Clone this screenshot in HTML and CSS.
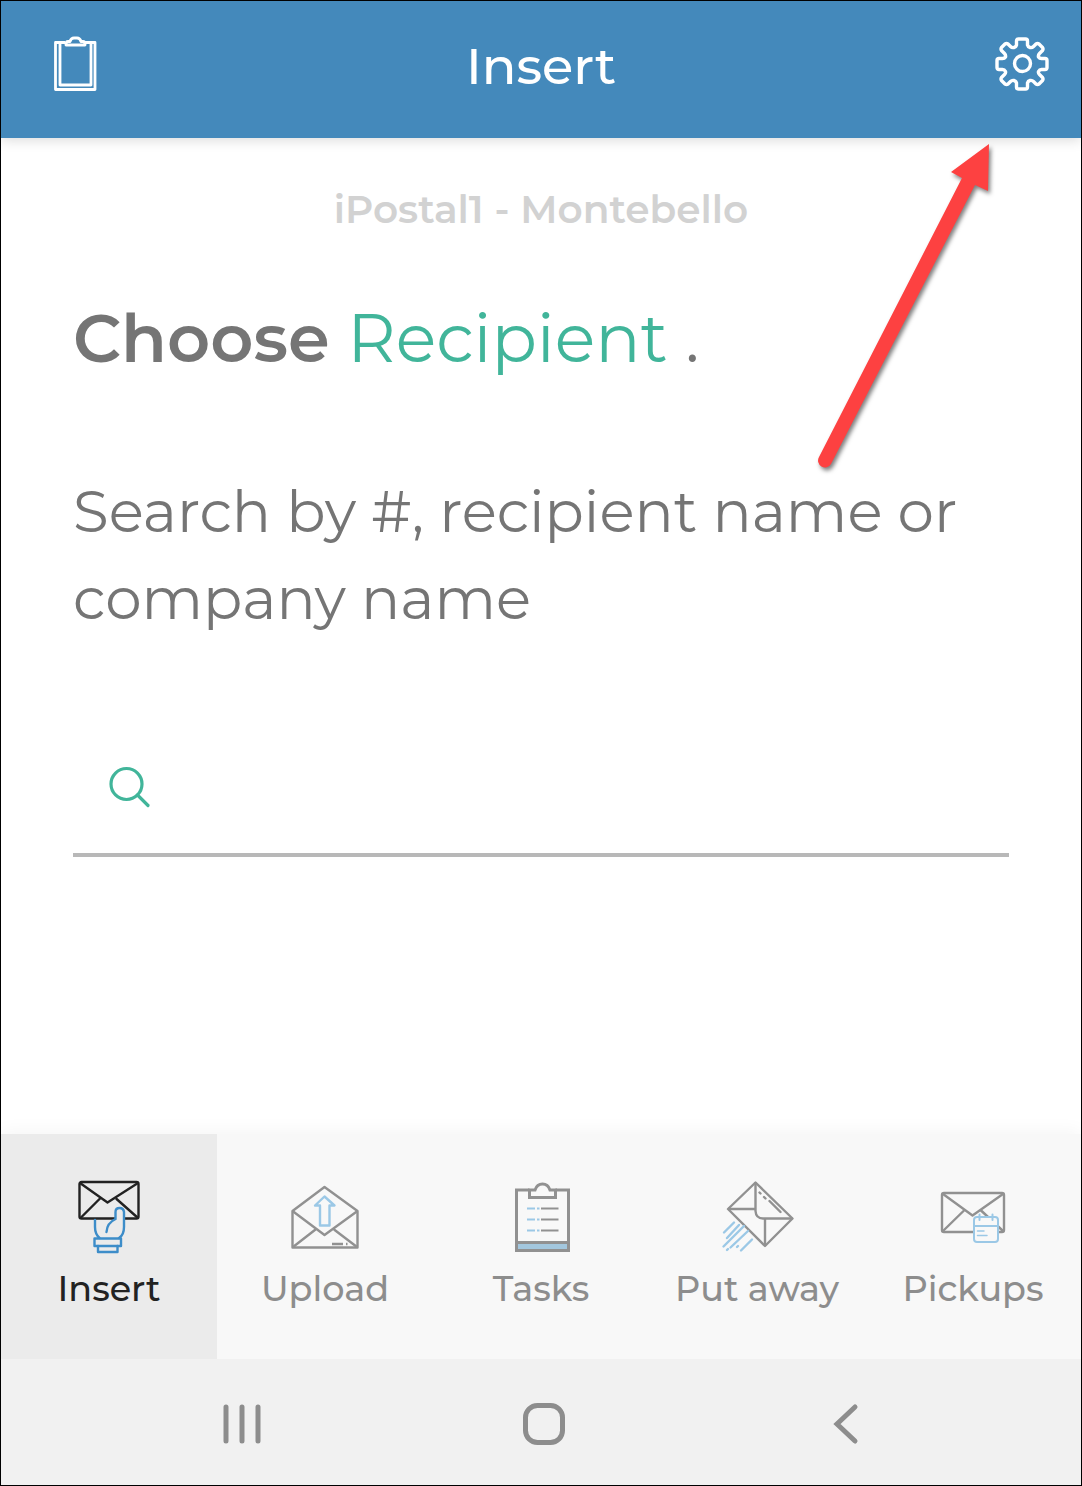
FILE: index.html
```html
<!DOCTYPE html>
<html lang="en">
<head>
    <meta charset="UTF-8">
    <meta name="viewport" content="width=device-width, initial-scale=1.0">
    <title>Insert</title>
    <link rel="stylesheet" href="styles.css">
</head>
<body>

<header class="topbar">
    <button class="icon-button" type="button" aria-label="Clipboard">
        <svg width="44" height="56" viewBox="0 0 44 56" fill="none" stroke="#fff" stroke-width="2.8" stroke-linejoin="round">
            <path d="M12 6.500H2.500V53.500H42V6.500H32"/>
            <path d="M12 6.500H7V49H38V6.500H32"/>
            <path d="M13 9V8Q13 5.500 15 5.500H17Q18 2 21 2H24Q27 2 28 5.500H30Q32 5.500 32 8V9Z"/>
        </svg>
    </button>
    <h1>Insert</h1>
    <button class="icon-button" type="button" aria-label="Settings">
        <svg width="54" height="54" viewBox="0 0 54 54" fill="none" stroke="#fff" stroke-width="3.4" stroke-linejoin="round">
            <circle cx="27.500" cy="26.500" r="8"/>
            <path d="M21.500 4Q21.500 2 23.500 2H30.500Q32.500 2 32.500 4V8Q33 10 35 10.500Q37 11 38.500 9.500L41 7Q42.500 6 44 7L47.500 10.500Q48.500 12 47.500 13.500L44.500 16.500Q43 18 43.500 20Q44.500 21.500 46.500 21.500H50Q52 21.500 52 23.500V30.500Q52 32.500 50 32.500H46.500Q44.500 32.500 43.500 34.500Q43 36 44.500 37.500L47.500 40.500Q48.500 42 47.500 43.500L44 47Q42.500 48 41 47L38.500 44.500Q37 43 35 43.500Q33 44 32.500 46V50Q32.500 52 30.500 52H23.500Q21.500 52 21.500 50V46Q21 44 19 43.500Q17 43 15.500 44.500L13 47Q11.500 48 10 47L6.500 43.500Q5.500 42 6.500 40.500L9.500 37.500Q11 36 10.500 34.500Q9.500 32.500 7.500 32.500H4Q2 32.500 2 30.500V23.500Q2 21.500 4 21.500H7.500Q9.500 21.500 10.500 20Q11 18 9.500 16.500L6.500 13.500Q5.500 12 6.500 10.500L10 7Q11.500 6 13 7L15.500 9.500Q17 11 19 10.500Q21 10 21.500 8Z"/>
        </svg>
    </button>
</header>

<main class="content">
    <p class="station">iPostal1 - Montebello</p>
    <h2><strong>Choose</strong> <span class="accent">Recipient</span> .</h2>
    <label class="hint" for="search">Search by #, recipient name or company name</label>
    <div class="search">
        <svg width="42" height="42" viewBox="0 0 42 42" fill="none" stroke="#41b59a" stroke-width="3.2" stroke-linecap="round">
            <circle cx="17.500" cy="18" r="15.500"/>
            <path d="M28.500 29L39 39.500"/>
        </svg>
        <input type="text" id="search">
    </div>
    <!-- Arrow pointing at the settings button -->
    <svg class="arrow" width="220" height="350" viewBox="0 0 220 350">
        <path d="M189 14L151 42L162 48L19 327A6.500 6.500 0 0 0 31 334L175 55L188 61Z" fill="#fd4141"/>
    </svg>
</main>

<nav class="tabs">
    <a class="tab active" href="#insert">
        <svg width="80" height="80" viewBox="0 0 80 80" fill="none" stroke="#222" stroke-width="2.4" stroke-linejoin="round">
            <rect x="10.500" y="5" width="59" height="36.500" rx="2"/>
            <path d="M11 6L38.500 25.500L69 6M11.500 41L31 21.500M69 41L47 21.500"/>
            <g stroke="#3d8dc9" stroke-width="2.4" stroke-linecap="round">
                <path d="M46.500 44V35Q46.500 31 50.500 31T55 35V44" fill="#ebebeb" stroke="none"/>
                <path d="M26 43V50Q26 57 30.500 61M46.500 42V35Q46.500 31 50.500 31T55 35V50Q55 58 50 61M46.500 42Q38 46 37.500 55"/>
                <rect x="25.500" y="61.500" width="26.500" height="7.500"/>
                <path d="M29 69V75H48.500V69"/>
            </g>
        </svg>
        Insert
    </a>
    <a class="tab" href="#upload">
        <svg width="80" height="80" viewBox="0 0 80 80" fill="none" stroke="#919191" stroke-width="2.4" stroke-linejoin="round">
            <path d="M7.500 34L39.500 10L72.500 34V70.500H7.500Z"/>
            <path d="M7.500 34L39.500 58L72.500 34M8 70L30.500 52.500M72 70L49 52.500M47 67H58M61 67H62.500"/>
            <path d="M39.500 19.500L49.500 28.500H44.500V48.500H35V28.500H30Z" stroke="#9bc8e6"/>
        </svg>
        Upload
    </a>
    <a class="tab" href="#tasks">
        <svg width="80" height="80" viewBox="0 0 80 80" fill="none" stroke="#919191" stroke-width="3">
            <rect x="15.500" y="65.500" width="52" height="8" fill="#a3c7de"/>
            <path d="M28.500 13H15.500V73.500H67.500V13H54.500"/>
            <path d="M28.500 13H34Q36 7 41.500 7T49 13H54.500V20.500H28.500Z"/>
            <path d="M40 31.500H57.500M40 42.500H57.500M40 53.500H57.500" stroke-width="2"/>
            <path d="M26 31.500H34M36 31.500H38.500M26 42.500H34M36 42.500H38.500M26 53.500H34M36 53.500H38.500" stroke="#9bc8e6" stroke-width="2"/>
        </svg>
        Tasks
    </a>
    <a class="tab" href="#putaway">
        <svg width="80" height="80" viewBox="0 0 80 80" fill="none" stroke="#919191" stroke-width="2.4" stroke-linejoin="round">
            <path d="M38.500 5.500L75.500 41.500L48 69L11 32Z"/>
            <path d="M11 32H38.500M38.500 5.500V34Q39 41.500 46 41.500H75.500M48 41.500V69"/>
            <path d="M42.500 15.500L43.500 16.500M47 20L48.500 21.500M52.500 24L63.500 35" stroke-linecap="round"/>
            <path d="M7 55.500L17 45.500M10 61L22 48M6.500 69.500L27 49M13.500 70.500L31 54M20 70L21 69M24 73.500L35 62.500M10 73L11 72" stroke="#9bc8e6" stroke-linecap="round"/>
        </svg>
        Put away
    </a>
    <a class="tab" href="#pickups">
        <svg width="80" height="80" viewBox="0 0 80 80" fill="none" stroke="#919191" stroke-width="2.4" stroke-linejoin="round">
            <rect x="9" y="16" width="62" height="39" rx="2"/>
            <path d="M10 17L39.500 38.500L70 17M10 54L31.500 33M70 54L47 32.500"/>
            <g stroke="#9bc8e6" stroke-width="2" stroke-linecap="round">
                <rect x="41" y="40" width="24" height="25" rx="3" fill="#f8f8f8"/>
                <path d="M41 49H65M46.500 37.500V43M59.500 37.500V43"/>
                <path d="M44.500 54H51M44.500 58.500H54" stroke-width="1.500"/>
            </g>
        </svg>
        Pickups
    </a>
</nav>

<footer class="system-nav">
    <button class="icon-button" type="button" aria-label="Recent apps">
        <svg width="42" height="42" viewBox="0 0 42 42" stroke="#8d8d8d" stroke-width="5" stroke-linecap="round">
            <path d="M4 4V38M20 4V38M36 4V38"/>
        </svg>
    </button>
    <button class="icon-button" type="button" aria-label="Home">
        <svg width="42" height="42" viewBox="0 0 42 42" fill="none" stroke="#8d8d8d" stroke-width="5">
            <rect x="2.500" y="2.500" width="37" height="37" rx="12"/>
        </svg>
    </button>
    <button class="icon-button" type="button" aria-label="Back">
        <svg width="42" height="42" viewBox="0 0 42 42" fill="none" stroke="#8d8d8d" stroke-width="5" stroke-linecap="round">
            <path d="M31 4L13 21L31 38"/>
        </svg>
    </button>
</footer>

</body>
</html>
```
FILE: styles.css
```css
* { box-sizing: border-box; }
body { margin: 0; min-height: 100vh; display: flex; flex-direction: column; border: 1px solid #000; background: #fff; color: #757575; font-family: Montserrat, Inter, sans-serif; }
h1, h2, p { margin: 0; font-weight: 400; }
svg { display: block; flex: none; }
.icon-button { padding: 0; border: 0; background: none; cursor: pointer; }

.topbar { display: flex; align-items: center; justify-content: space-between; height: 137px; padding: 0 32px 11px 52px; background: #4489bb; color: #fff; box-shadow: 0 2px 12px rgba(0, 0, 0, 0.15); }
.topbar h1 { flex: 1; padding: 4px 10px 0 0; font-size: 51px; line-height: 64px; font-weight: 500; text-align: center; }

.content { position: relative; flex: 1; padding: 47px 72px; }
.station { color: #d2d2d2; font-size: 39px; line-height: 48px; font-weight: 600; text-align: center; }
.content h2 { margin-top: 61px; font-size: 67px; line-height: 88px; }
.content strong { font-weight: 600; }
.accent { color: #41b59a; }
.hint { display: block; margin-top: 86px; font-size: 58px; line-height: 87px; }
.search { display: flex; align-items: center; gap: 24px; height: 136px; margin-top: 79px; padding-left: 36px; border-bottom: 4px solid #b8b8b8; }
.search input { flex: 1; min-width: 0; height: 80px; padding: 0; border: 0; outline: 0; background: none; color: #757575; font: inherit; font-size: 48px; }
.arrow { position: absolute; top: -8px; right: 61px; filter: drop-shadow(2px 3px 2px rgba(0, 0, 0, 0.5)); pointer-events: none; }

.tabs { display: grid; grid-template-columns: repeat(5, 1fr); height: 225px; background: #f8f8f8; box-shadow: 0 -4px 16px rgba(0, 0, 0, 0.04); }
.tab { display: flex; flex-direction: column; align-items: center; gap: 8px; padding-top: 43px; color: #8d8d8d; font-size: 35px; line-height: 48px; font-weight: 500; text-decoration: none; white-space: nowrap; }
.tab.active { background: #ebebeb; color: #222; }

.system-nav { display: grid; grid-template-columns: repeat(3, 28%); justify-content: center; align-items: center; justify-items: center; height: 126px; padding-left: 6px; padding-top: 4px; background: #f1f1f1; }
```
